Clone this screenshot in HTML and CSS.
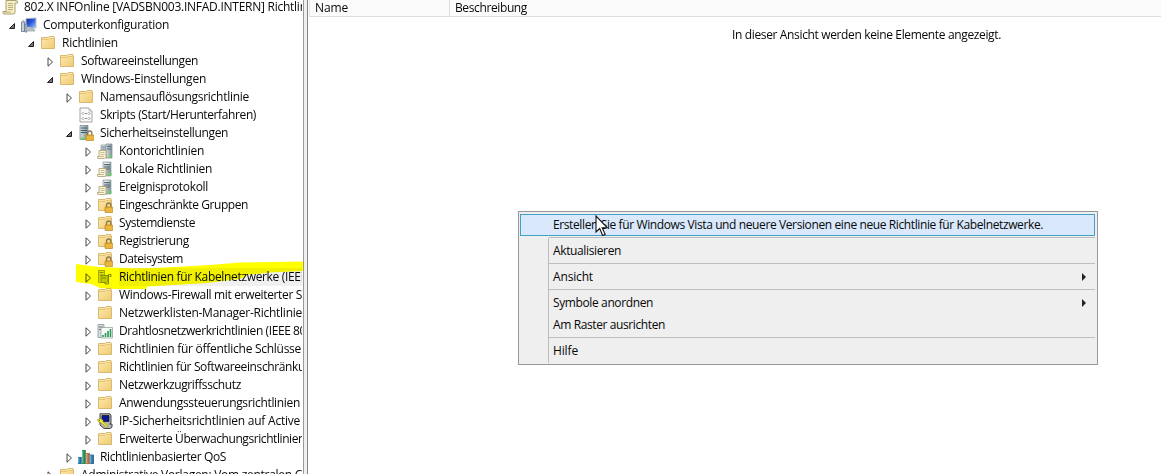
FILE: index.html
```html
<!DOCTYPE html>
<html lang="de">
<head>
<meta charset="utf-8">
<title>Gruppenrichtlinienverwaltungs-Editor</title>
<link rel="stylesheet" href="styles.css">
</head>
<body>
<svg class="defs" width="0" height="0" aria-hidden="true">
  <defs>
    <linearGradient id="gold" x1="0" y1="0" x2="1" y2="1"><stop offset="0" stop-color="#fde9ae"/><stop offset="1" stop-color="#efcb72"/></linearGradient>
    <linearGradient id="steel" x1="0" y1="0" x2="1" y2="0"><stop offset="0" stop-color="#d5dfe3"/><stop offset="1" stop-color="#82939a"/></linearGradient>
    <linearGradient id="blue" x1="0" y1="0" x2="1" y2="1"><stop offset="0" stop-color="#0822a0"/><stop offset=".5" stop-color="#315ee0"/><stop offset="1" stop-color="#9bd6ff"/></linearGradient>
  </defs>
  <symbol id="folder" viewBox="0 0 16 16">
    <path d="M1.500 2.500h6.500l1-1h5v1.500h.500v10.500h-13z" fill="url(#gold)" stroke="#d9b871"/>
    <path d="M9 3h4.500" stroke="#fff8da" fill="none"/>
    <path d="M2 4.500h6l1-1h5" stroke="#e2bd6c" stroke-width=".8" fill="none"/>
  </symbol>
  <symbol id="lock" viewBox="0 0 16 16">
    <path d="M9.500 10V8.500a2.200 2.500 0 0 1 4.400 0V10" fill="none" stroke="#8d7b52" stroke-width="1.300"/>
    <rect x="8" y="10" width="7.700" height="5.500" rx=".5" fill="#e5a92b" stroke="#b37b18" stroke-width=".6"/>
    <path d="M8.500 12h7M8.500 14h7" stroke="#f7cf61" stroke-width=".7"/>
  </symbol>
  <symbol id="folderlock" viewBox="0 0 16 16"><use href="#folder"/><use href="#lock"/></symbol>
  <symbol id="tower" viewBox="0 0 16 16">
    <path d="M6 1h8v14H6z" fill="url(#steel)" stroke="#8d9b9f" stroke-width=".7"/>
    <path d="M7 3.500h6M7 6h6M7 8h6" stroke="#51636c" stroke-width=".9"/>
    <path d="M7 2.300h6" stroke="#f7ffff" stroke-width=".8"/>
    <rect x="12" y="12" width="2.500" height="2.500" fill="#5fdc4a"/>
  </symbol>
  <symbol id="page" viewBox="0 0 16 16">
    <path d="M2 7.500h7v6.500q0 1.500-1.500 1.500H1q-1 0-.5-2H2z" fill="#fbf5d6" stroke="#a79c72" stroke-width=".8"/>
    <path d="M3.500 9.500h4M3.500 11.500h4M1 13.500h6" stroke="#b1a676" stroke-width=".7"/>
  </symbol>
  <symbol id="server" viewBox="0 0 16 16"><use href="#tower"/><use href="#page"/></symbol>
  <symbol id="servers" viewBox="0 0 16 16">
    <path d="M4 2h5v12H4z" fill="#dce4e6" stroke="#87979b" stroke-width=".7"/><path d="M4.500 4h4M4.500 6h4" stroke="#687d85"/>
    <path d="M9 1h6v14H9z" fill="url(#steel)" stroke="#788b91" stroke-width=".7"/><path d="M10 3.500h4M10 6h4" stroke="#4f6873"/><path d="M12.500 12h2v2.500h-2z" fill="#5fdc4a"/>
    <use href="#page"/>
  </symbol>
  <symbol id="security" viewBox="0 0 16 16">
    <path d="M2 .500h8v14H2z" fill="url(#steel)" stroke="#718288" stroke-width=".7"/><path d="M3 3h6M3 5.500h6M3 7.500h6" stroke="#3f5e70"/><path d="M3 13.500h4" stroke="#61d84c" stroke-width="1.500"/><use href="#lock"/>
  </symbol>
  <symbol id="script" viewBox="0 0 16 16">
    <path d="M2 1h9l3 3v11H2z" fill="#fafafa" stroke="#999" stroke-width=".9"/><path d="M11 1v3h3" fill="#ddd" stroke="#aaa" stroke-width=".7"/>
    <path d="M5.500 5 4 6.500 5.500 8M10.500 5 12 6.500 10.500 8M5.500 10 4 11.500 5.500 13M10.500 10 12 11.500 10.500 13M6.500 6.500h3M6.500 11.500h3" fill="none" stroke="#777" stroke-width=".8"/>
  </symbol>
  <symbol id="scroll" viewBox="0 0 16 16">
    <path d="M4 1.500h10q2 0 1.500 2.500h-2.500v9q0 2-2 2H2q-1.500 0-1-2.500h3z" fill="#f7efc6" stroke="#a29565" stroke-width=".9"/>
    <path d="M6 4.500h5M6 6.500h5M6 8.500h5M6 10.500h5M2 13h7" stroke="#a99c6c" stroke-width=".8"/>
  </symbol>
  <symbol id="computer" viewBox="0 0 16 16">
    <path d="M5 1.500 15 1v10L5 10z" fill="url(#blue)" stroke="#b6bdc5"/><path d="M8 11h4l2 3H7z" fill="#bbc4c9" stroke="#849097" stroke-width=".6"/>
    <path d="M.500 5h3v9.500h-3zM4 7h2v8H4z" fill="#c7d1d8" stroke="#617585" stroke-width=".8"/><path d="M1 4.500 3 3.500l2 2" stroke="#8b9ba5" fill="none"/>
  </symbol>
  <symbol id="wired" viewBox="0 0 16 16">
    <path d="M1.500 1.500h6v12h-6z" fill="#dce0dc" stroke="#8d968c" stroke-width=".8"/><path d="M2.500 3.500h4M2.500 6h4" stroke="#89938b"/>
    <path d="M4 6.500h7v6l-1.500 1h-4L4 12.500z" fill="#c3cbc1" stroke="#7e897d" stroke-width=".9"/><path d="M6 8v2M8 8v2" stroke="#7f8b74"/>
    <path d="M8 13.500v1.500h3.500V5.500H14v2h-1.500" stroke="#7e897d" fill="none"/>
  </symbol>
  <symbol id="wireless" viewBox="0 0 16 16">
    <path d="M1 1.500h6v13H1z" fill="#d7dedf" stroke="#88969a" stroke-width=".8"/><path d="M2 4h4M2 6.500h4" stroke="#667880"/>
    <path d="M4 4.500h11.500V15H4z" fill="#f5faf5" stroke="#96a59b" stroke-width=".8"/><path d="M6 14v-2M8.500 14v-4M11 14V8M13.500 14V6" stroke="#279757" stroke-width="1.600"/>
  </symbol>
  <symbol id="ipsec" viewBox="0 0 16 16">
    <path d="M3 .800h10l1 1.700V10l-1.500 1H15v3l-2 1.500H7L3 12z" fill="#b9b9b5" stroke="#333" stroke-width=".9"/><path d="M5 2.500h7v6H5z" fill="#0a1796" stroke="#111" stroke-width=".7"/>
    <path d="M.500 6.500 3 5.500l3 1.500v1.500l5 5-1.500.8L4.500 10 1 8.500z" fill="#f6f22b" stroke="#77740b" stroke-width=".5"/><path d="m2 7 1 .6" stroke="#333"/>
  </symbol>
  <symbol id="qos" viewBox="0 0 16 16">
    <path d="M0 8h3.500v7H0z" fill="#2378b5"/><path d="M4 1h3.500v14H4z" fill="#239a50"/><path d="M8 4h3.500v11H8z" fill="#dd713c"/><path d="M12 5.500h3.700V15H12z" fill="#247ebd"/>
    <path d="M.700 8.500V14M4.700 2v12M8.700 5v9M12.700 6.500V14" stroke="#9fd6dc" stroke-width=".7"/><path d="M3.200 8v7M7.200 1v14M11.200 4v11M15.400 6v9" stroke="#263d4c" stroke-width=".6"/>
  </symbol>
  <symbol id="open" viewBox="0 0 8 10"><path d="M6.500 2.500v5h-5z" fill="#777" stroke="#222"/></symbol>
  <symbol id="closed" viewBox="0 0 8 10"><path d="M2 .800v8.400L6.500 5z" fill="#fff" fill-opacity=".6" stroke="#333" stroke-width=".9"/></symbol>
</svg>

<main class="window">
  <section class="tree" id="tree"></section>
  <div class="splitter"></div>
  <section class="list">
    <header class="columns"><span class="col name"><span data-w="33">Name</span></span><span class="col"><span data-w="72">Beschreibung</span></span></header>
    <p class="empty"><span data-w="269">In dieser Ansicht werden keine Elemente angezeigt.</span></p>
  </section>
</main>

<svg class="marker" width="303" height="30" viewBox="0 0 303 30"><path d="M76 4Q88 6 100 7 130 9 165 7.500L210 5 240 2.500 303 1.500v9.500L270 12.500 247 15 240 19 207 23 165 25.500 147 26.500 146 29 116 29 100 28 91 24 76 22z" fill="#ff0"/></svg>

<nav class="menu">
  <div class="item active"><span data-w="490">Erstellen Sie für Windows Vista und neuere Versionen eine neue Richtlinie für Kabelnetzwerke.</span></div>
  <div class="sep"></div>
  <div class="item"><span data-w="68">Aktualisieren</span></div>
  <div class="sep"></div>
  <div class="item sub"><span data-w="40">Ansicht</span></div>
  <div class="sep"></div>
  <div class="item sub"><span data-w="100">Symbole anordnen</span></div>
  <div class="item"><span data-w="112">Am Raster ausrichten</span></div>
  <div class="sep"></div>
  <div class="item"><span data-w="25">Hilfe</span></div>
</nav>
<svg class="cursor" width="14" height="22" viewBox="0 0 14 22"><path d="M1 1v16l3.700-3.500 3 7 2.500-1.100-3-6.700h5z" fill="#fff" stroke="#111" stroke-width="1.100"/></svg>
<script src="tree.js"></script>
</body>
</html>
```

FILE: styles.css
```css
* { box-sizing: border-box; }
body { margin: 0; width: 1161px; height: 474px; overflow: hidden; position: relative; background: #fff; color: #080808; font: 12px/18px "Open Sans", "Noto Sans", sans-serif; }
.defs { position: absolute; }
.window { display: flex; height: 474px; }
.tree { width: 303px; height: 474px; overflow: hidden; padding-right: 1px; }
.row { display: flex; align-items: center; height: 18px; white-space: pre; overflow: hidden; }
.row:first-child { height: 16px; }
.row:first-child > * { transform: translateY(-1px); }
.row.selected .label { background: #f0f0f0; flex-grow: 1; }
.twisty { width: 8px; height: 10px; margin: 1px 5px 0 0; flex: none; }
.icon { width: 16px; height: 16px; margin-right: 6px; flex: none; }
.label { display: block; flex: none; height: 18px; }
.splitter { width: 5px; border-left: 1px solid #9a9a9a; border-right: 1px solid #858585; background: #f0f0f0; }
.list { flex: 1; padding-left: 1px; }
.columns { display: flex; height: 17px; background: #fbfbfb; border-bottom: 1px solid #dedede; border-left: 1px solid #e4e4e4; }
.col { padding-left: 5px; line-height: 16px; white-space: nowrap; }
.col.name { width: 140px; border-right: 1px solid #dcdcdc; }
.empty { margin: 9px 0 0; padding-left: 423px; white-space: nowrap; }
.marker { position: absolute; left: 0; top: 260px; mix-blend-mode: multiply; }
.menu { position: absolute; left: 518px; top: 211px; width: 580px; height: 154px; padding: 2px 2px 0 1px; border: 1px solid #979797; background: linear-gradient(#bdbdbd, #bdbdbd) 29px 26px / 1px 125px no-repeat #efefef; }
.item { display: flex; align-items: center; justify-content: space-between; height: 22px; padding: 0 9px 0 33px; white-space: nowrap; }
.item.active { border: 1px solid #439fca; background: #d9e8fb; padding-left: 32px; }
.item.sub::after { content: ""; border-left: 4px solid #222; border-top: 4px solid transparent; border-bottom: 4px solid transparent; }
.sep { height: 4px; padding-top: 1px; margin-left: 29px; }
.sep::before { content: ""; display: block; height: 1px; background: #bdbdbd; }
.cursor { position: absolute; left: 595px; top: 215px; }
```

FILE: tree.js
```js
// level, twisty, icon, label, label width
const rows = [
  [0, "", "scroll", "802.X INFOnline [VADSBN003.INFAD.INTERN] Richtlinie", 292],
  [1, "open", "computer", "Computerkonfiguration", 126],
  [2, "open", "folder", "Richtlinien", 56],
  [3, "closed", "folder", "Softwareeinstellungen", 117],
  [3, "open", "folder", "Windows-Einstellungen", 125],
  [4, "closed", "folder", "Namensauflösungsrichtlinie", 149],
  [4, "", "script", "Skripts (Start/Herunterfahren)", 156],
  [4, "open", "security", "Sicherheitseinstellungen", 128],
  [5, "closed", "servers", "Kontorichtlinien", 85],
  [5, "closed", "server", "Lokale Richtlinien", 93],
  [5, "closed", "server", "Ereignisprotokoll", 89],
  [5, "closed", "folderlock", "Eingeschränkte Gruppen", 129],
  [5, "closed", "folderlock", "Systemdienste", 76],
  [5, "closed", "folderlock", "Registrierung", 70],
  [5, "closed", "folderlock", "Dateisystem", 64],
  [5, "closed", "wired", "Richtlinien für Kabelnetzwerke (IEEE", 188],
  [5, "closed", "folder", "Windows-Firewall mit erweiterter S", 183],
  [5, "", "folder", "Netzwerklisten-Manager-Richtlinie", 183],
  [5, "closed", "wireless", "Drahtlosnetzwerkrichtlinien (IEEE 80", 187],
  [5, "closed", "folder", "Richtlinien für öffentliche Schlüsse", 182],
  [5, "closed", "folder", "Richtlinien für Softwareeinschränku", 186],
  [5, "closed", "folder", "Netzwerkzugriffsschutz", 122],
  [5, "closed", "folder", "Anwendungssteuerungsrichtlinien", 181],
  [5, "closed", "ipsec", "IP-Sicherheitsrichtlinien auf Active", 181],
  [5, "closed", "folder", "Erweiterte Überwachungsrichtlinien", 186],
  [4, "closed", "qos", "Richtlinienbasierter QoS", 126],
  [3, "closed", "folder", "Administrative Vorlagen: Vom zentralen C", 221]
];
document.getElementById("tree").innerHTML = rows.map(([level, twisty, icon, label, width]) =>
  `<div class="row${icon === "wired" ? " selected" : ""}">
    <svg class="twisty" style="margin-left:${level * 19 - 11}px">${twisty ? `<use href="#${twisty}"/>` : ""}</svg><svg class="icon"><use href="#${icon}"/></svg><span class="label"><span data-w="${width}">${label}</span></span>
  </div>`.replace(/\n\s*/g, "")).join("");

for (const el of document.querySelectorAll("[data-w]")) {
  const extra = Number(el.dataset.w) - el.getBoundingClientRect().width;
  el.style.letterSpacing = extra / el.textContent.length + "px";
}
```
